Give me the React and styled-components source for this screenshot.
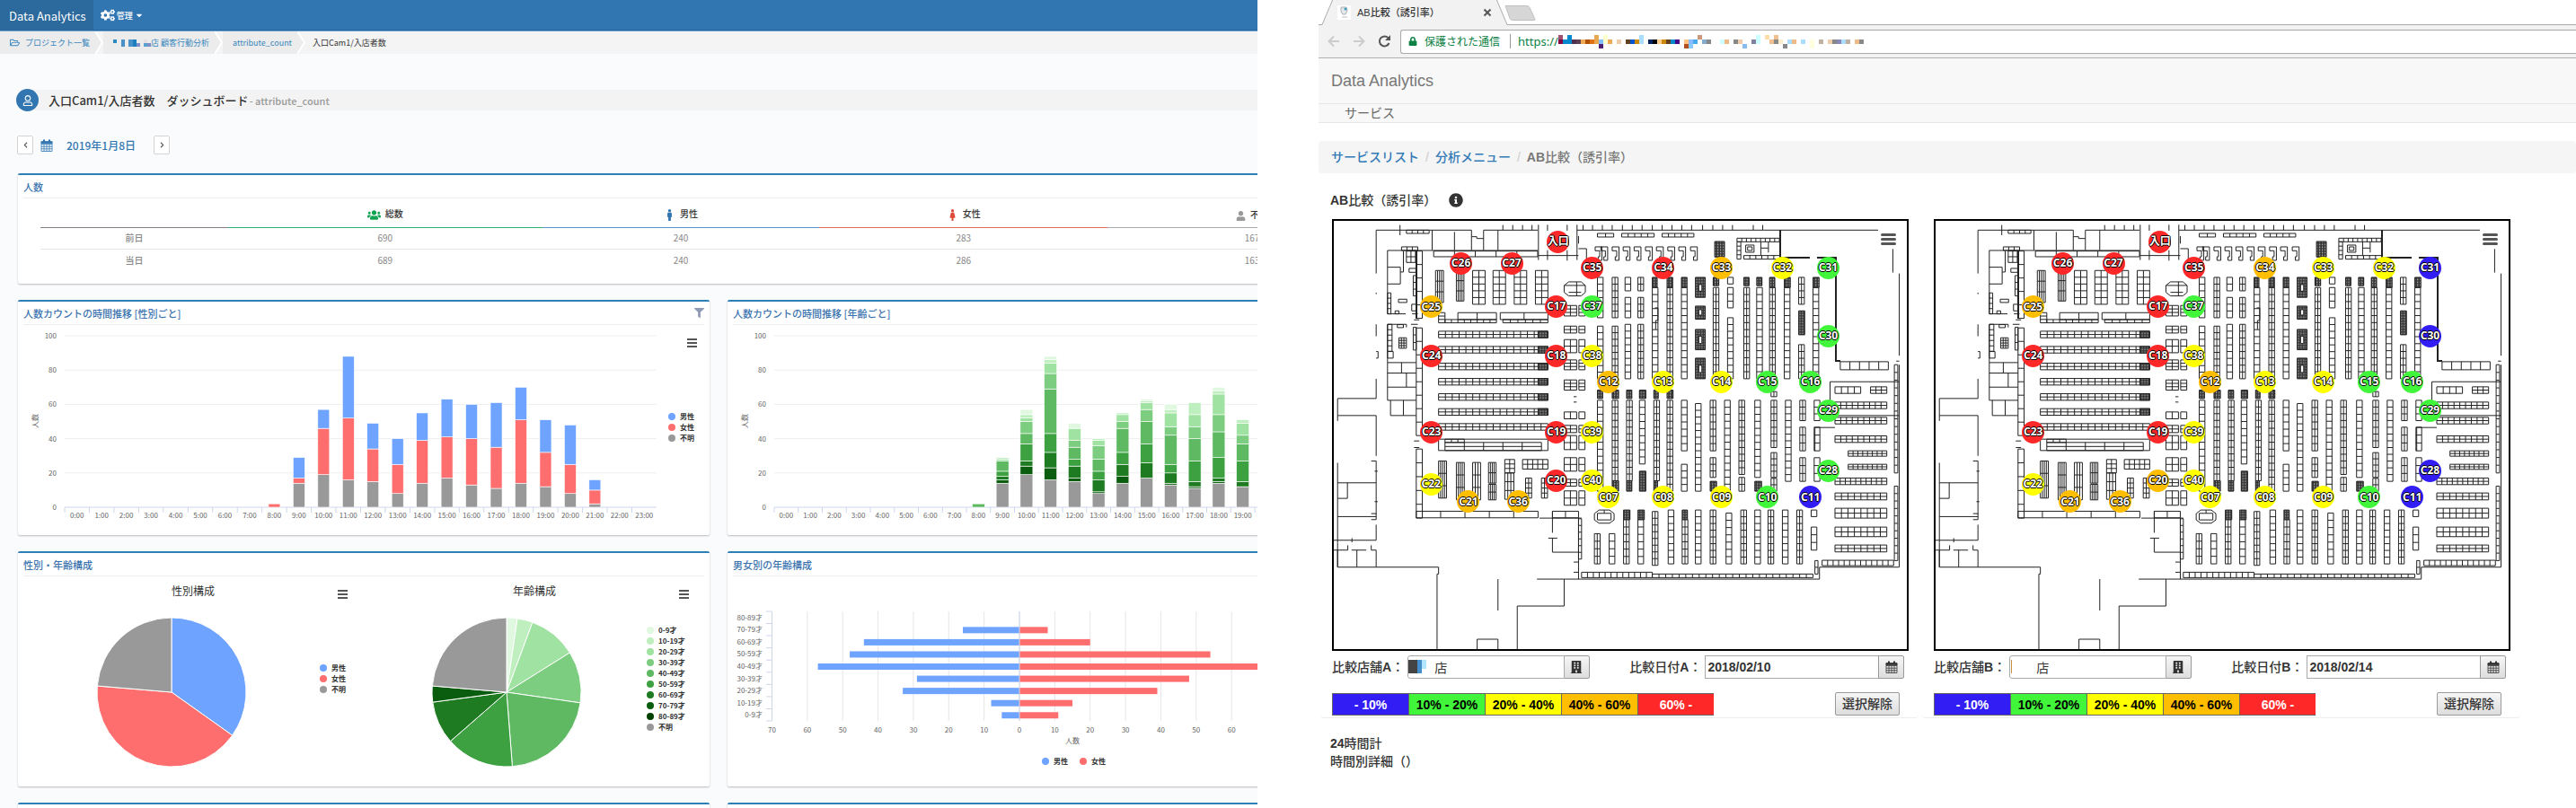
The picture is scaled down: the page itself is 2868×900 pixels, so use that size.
import styled, { createGlobalStyle } from 'styled-components';
import { useState } from 'react';
import {
  FaCogs, FaCaretDown, FaRegFolderOpen, FaRegUser, FaFilter, FaUsers, FaMale,
  FaFemale, FaUser, FaBuilding, FaInfoCircle, FaLock, FaChevronLeft, FaChevronRight,
} from 'react-icons/fa';

const BLUE = '#6ea3ff';
const RED = '#ff6e6e';
const GRAY = '#999999';
const GREENS = ['#e0f8e0', '#bfefbf', '#a0e2a2', '#7dcd80', '#5eb962', '#3da041', '#1e7b22', '#0a5d0e', '#004000'];
const AGES = ['0-9才', '10-19才', '20-29才', '30-39才', '40-49才', '50-59才', '60-69才', '70-79才', '80-89才'];

// per hour, bottom of the stack first
const genderByHour = {
  8: [0, 2, 0], 9: [14, 3, 12], 10: [19, 27, 11], 11: [16, 36, 36], 12: [15, 19, 15],
  13: [8, 17, 15], 14: [14, 25, 16], 15: [17, 24, 22], 16: [13, 27, 20], 17: [11, 24, 26],
  18: [14, 37, 19], 19: [12, 20, 19], 20: [8, 17, 23], 21: [2, 8, 6],
};

// unknown, 70s, 60s, 50s, 40s, 30s, 20s, 10s, 0s
const ageByHour = {
  8: [0, 0, 0, 0, 2], 9: [14, 2, 2, 3, 6, 0, 1, 1, 0], 10: [19, 5, 3, 10, 6, 7, 2, 2, 3],
  11: [16, 7, 9, 11, 26, 9, 6, 2, 2], 12: [15, 2, 7, 4, 7, 4, 7, 0, 3], 13: [8, 1, 7, 5, 7, 8, 3, 1, 0],
  14: [14, 4, 7, 7, 14, 4, 4, 1, 0], 15: [17, 0, 9, 11, 13, 7, 4, 1, 1], 16: [13, 1, 6, 5, 17, 5, 8, 2, 3],
  17: [11, 1, 3, 12, 13, 7, 7, 7, 0], 18: [14, 1, 2, 12, 15, 10, 12, 2, 2], 19: [12, 0, 3, 12, 10, 5, 7, 2, 0],
};
const ageColors = [GRAY, GREENS[7], GREENS[6], GREENS[5], GREENS[4], GREENS[3], GREENS[2], GREENS[1], GREENS[0]];

const pyramid = [
  ['80-89才', 0, 0], ['70-79才', 16, 8], ['60-69才', 44, 20], ['50-59才', 48, 54], ['40-49才', 57, 91],
  ['30-39才', 29, 48], ['20-29才', 33, 39], ['10-19才', 8, 15], ['0-9才', 5, 11],
];

const counts = [
  { day: '前日', values: [690, 240, 283, 167] },
  { day: '当日', values: [689, 240, 286, 163] },
];

// urls are masked: [column, row, colour]
const urlMask = [
  [0, 0, '#a0506e'], [2, 0, '#0088cc'], [8, 0, '#e8a850'], [10, 0, '#ffffcc'], [18, 0, '#aaddff'], [31, 0, '#cc9980'],
  [44, 0, '#ccffff'], [46, 0, '#ffddaa'], [48, 0, '#eec090'],
  [0, 1, '#800040'], [1, 1, '#0088cc'], [2, 1, '#0088cc'], [3, 1, '#503050'], [4, 1, '#604050'], [5, 1, '#eeaa55'],
  [6, 1, '#b05000'], [7, 1, '#e07010'], [8, 1, '#e8a850'], [9, 1, '#80c0ff'], [10, 1, '#ffffcc'], [11, 1, '#eeaa55'],
  [13, 1, '#eeccaa'], [15, 1, '#604020'], [16, 1, '#0055cc'], [17, 1, '#cc8800'], [18, 1, '#aaddff'], [20, 1, '#002060'],
  [21, 1, '#000000'], [22, 1, '#ffcc88'], [23, 1, '#cc8800'], [24, 1, '#604020'], [25, 1, '#0088cc'], [26, 1, '#440088'],
  [28, 1, '#ffc080'], [29, 1, '#88bbff'], [30, 1, '#44aaee'], [32, 1, '#88aacc'], [33, 1, '#888888'], [36, 1, '#ccffff'],
  [37, 1, '#eebb88'], [39, 1, '#888888'], [40, 1, '#eeccaa'], [43, 1, '#8080a0'], [44, 1, '#ccffff'], [47, 1, '#eec090'],
  [48, 1, '#888888'], [49, 1, '#ffeecc'], [51, 1, '#aaddff'], [52, 1, '#eebb88'], [54, 1, '#aaddff'], [56, 1, '#ffffe0'],
  [58, 1, '#c0b0a0'], [60, 1, '#eeccaa'], [61, 1, '#888888'], [62, 1, '#8888bb'], [63, 1, '#aaddff'], [64, 1, '#c0b0a0'],
  [66, 1, '#eebb88'], [67, 1, '#888888'],
  [9, 2, '#502070'], [28, 2, '#b05020'], [29, 2, '#88ccff'], [41, 2, '#88bbee'], [50, 2, '#888888'], [56, 2, '#ffffe0'],
];

const levels = {
  b: { bg: '#321ef5', fg: '#ffffff', text: '- 10%' },
  g: { bg: '#41f53a', fg: '#000000', text: '10% - 20%' },
  y: { bg: '#ffff00', fg: '#000000', text: '20% - 40%' },
  o: { bg: '#ffbe00', fg: '#000000', text: '40% - 60%' },
  r: { bg: '#ff2828', fg: '#ffffff', text: '60% -' },
};

// name, x, y on the plan, level in A, level in B
const cameras = [
  ['入口', 628, 117, 'r', 'r'], ['C26', 371, 190, 'r', 'r'], ['C27', 505, 190, 'r', 'r'], ['C35', 718, 205, 'r', 'r'],
  ['C34', 906, 205, 'r', 'o'], ['C33', 1060, 205, 'o', 'y'], ['C32', 1221, 205, 'y', 'y'], ['C31', 1342, 205, 'g', 'b'],
  ['C25', 292, 335, 'o', 'o'], ['C17', 623, 334, 'r', 'r'], ['C37', 718, 334, 'g', 'g'], ['C30', 1342, 433, 'g', 'b'],
  ['C24', 293, 499, 'r', 'r'], ['C18', 623, 499, 'r', 'r'], ['C38', 718, 499, 'y', 'y'], ['C12', 761, 586, 'o', 'o'],
  ['C13', 906, 586, 'y', 'y'], ['C14', 1060, 586, 'y', 'y'], ['C15', 1181, 586, 'g', 'g'], ['C16', 1295, 586, 'g', 'g'],
  ['C29', 1342, 682, 'g', 'g'], ['C23', 293, 754, 'r', 'r'], ['C19', 623, 754, 'r', 'r'], ['C39', 718, 754, 'y', 'y'],
  ['C22', 292, 928, 'y', 'y'], ['C20', 623, 916, 'r', 'o'], ['C40', 718, 916, 'y', 'y'], ['C21', 391, 986, 'o', 'o'],
  ['C36', 522, 986, 'o', 'o'], ['C07', 761, 972, 'y', 'y'], ['C08', 906, 972, 'y', 'y'], ['C09', 1060, 972, 'y', 'y'],
  ['C10', 1181, 972, 'g', 'g'], ['C11', 1295, 972, 'b', 'b'], ['C28', 1342, 883, 'g', 'b'],
];

// ---- floor plan -------------------------------------------------------

const PLAN = { x: 36, y: 49, w: 1515, h: 1432 };

const walls = `
M148 225V80H400V147M211 63V97M148 289V294M148 395V435M148 486h5v22h-5M148 577V643H46V718M46 700H148V835
M296 80V147M355 86V147M400 102h14v6h18M432 147V80H575M470 80V147M483 63V80M509 63V80M535 63V80M560 63V80
M577 62V180M601 62V82M601 147V180M653 62V82M653 147V182M679 62V180M577 165H683M683 100V125M683 142H704V175
M679 80H1172M695 63V80M720 63V80M746 63V80M772 63V80M799 63V80M825 63V80M851 63V80M878 63V80M904 63V80M930 63V80
M956 63V80M982 63V80M1011 63V80M1038 63V80M1064 63V80M1090 63V80M1145 63V80M1170 63V80M1172 80H1475
M1514 143V222M1531 225V500M1523 518h8M1531 530V1207H1320V1247H573M683 1247V1043M580 1043H691M614 1020V1092M603 1110H627
M614 1110V1157H683M670 1190H683M670 1224H683M645 1247V1337H521V1485M470 1247V1352M309 1485V1230H313V1207H46V1125M46 1150V1207
M46 858V1125M31 1117H148M84 1110V1124M31 1150H73V1134M83 1150H122M135 1134V1150H148V1207M97 1150V1207
M46 1038H148M46 925H148M72 925V977H46M135 852H148V1030M144 886h8M144 988h8M135 1028H148V1048H135M148 1065V1117
M415 1485V1448H470V1485M178 148V360H226M178 148H575M220 150V220H212M178 204H212V260H178M243 360H258M178 395H228V405M240 395H258
M178 395V523M178 523H254M215 523V558M178 558H254M228 558V605M178 605H254M178 523V649H254M186 649V700H254M220 649V700
M248 785H262M248 807H262M248 380H262M670 637h8M670 655h8M1348 655V587H1531M1365 700H1531M1361 740H1308V818
M885 340h8v42h-6v30M1165 119V165M1185 119V155M1185 140H1165`;

const thickWalls = 'M1215 80V172H1295M1313 172H1363V518H1375M254 148V375';

// x, y, width, height, columns, rows
const racks = [
  [254, 150, 16, 225, 1, 5], [254, 407, 16, 360, 1, 8], [254, 812, 16, 231, 1, 5], [254, 1020, 322, 22, 5, 1],
  [614, 1020, 69, 22, 2, 1], [300, 150, 275, 19, 5, 1], [215, 136, 43, 12, 3, 1], [228, 80, 60, 11, 4, 1],
  [235, 208, 18, 13, 1, 1], [207, 311, 22, 11, 1, 1], [242, 328, 12, 22, 1, 1], [198, 350, 10, 10, 1, 1],
  [178, 290, 9, 70, 1, 4], [246, 232, 9, 68, 1, 3], [228, 150, 24, 38, 2, 2], [204, 396, 16, 10, 1, 1],
  [208, 440, 20, 35, 3, 4], [178, 395, 12, 90, 1, 5], [246, 405, 8, 76, 1, 3], [178, 486, 15, 22, 1, 1],
  [305, 215, 21, 107, 4, 3], [360, 215, 20, 102, 4, 3], [403, 215, 33, 113, 2, 5], [457, 215, 33, 113, 2, 5],
  [513, 215, 33, 113, 2, 5], [569, 215, 33, 113, 2, 5], [313, 356, 17, 34, 1, 3], [364, 356, 102, 23, 2, 1],
  [476, 356, 126, 23, 2, 1], [330, 379, 136, 11, 8, 1], [483, 379, 119, 11, 6, 1],
  [313, 418, 289, 22, 16, 2], [313, 469, 289, 22, 16, 2], [313, 525, 289, 22, 16, 2], [313, 576, 289, 22, 16, 2],
  [313, 627, 289, 22, 16, 2], [313, 677, 289, 22, 16, 2], [313, 727, 289, 22, 16, 2], [313, 779, 289, 38, 1, 1],
  [330, 790, 255, 27, 5, 2], [330, 779, 51, 11, 3, 1], [313, 852, 21, 124, 4, 3], [360, 857, 21, 125, 4, 3],
  [403, 857, 21, 125, 3, 3], [445, 857, 20, 69, 4, 2], [445, 930, 20, 52, 4, 2], [488, 847, 26, 45, 2, 3],
  [488, 892, 24, 88, 3, 3], [535, 847, 67, 32, 5, 2], [543, 909, 16, 67, 2, 4], [585, 909, 16, 67, 2, 4],
  [733, 91, 43, 12, 2, 1], [797, 91, 86, 12, 5, 1], [904, 91, 84, 12, 5, 1], [1102, 107, 112, 12, 9, 1],
  [1102, 119, 10, 58, 1, 4], [1125, 130, 22, 24, 1, 1], [1130, 136, 12, 12, 1, 1], [1120, 165, 95, 12, 6, 1],
  [691, 1224, 187, 18, 12, 1], [878, 1230, 425, 12, 24, 1], [1308, 1185, 8, 45, 1, 2], [1327, 1184, 189, 18, 13, 1],
  [1518, 530, 9, 362, 1, 14], [1518, 936, 9, 249, 1, 10], [683, 1045, 8, 135, 1, 6],
  [1375, 520, 127, 27, 5, 1], [1361, 604, 68, 22, 4, 1], [1455, 604, 43, 22, 3, 2], [1361, 655, 137, 22, 9, 2],
  [1361, 706, 137, 22, 9, 2], [1361, 768, 137, 22, 9, 2], [1396, 818, 102, 18, 8, 2], [1396, 863, 102, 17, 8, 2],
  [1361, 909, 137, 22, 10, 2], [1361, 959, 137, 23, 8, 2], [1361, 1010, 137, 33, 8, 2], [1361, 1073, 137, 32, 8, 2],
  [1361, 1133, 137, 23, 8, 2],
];

// blocks of the central walkway: top, height, rows
[[332, 35, 3], [401, 23, 2], [446, 44, 2], [514, 33, 3], [581, 34, 3], [688, 23, 1], [733, 24, 2], [767, 47, 2],
  [841, 45, 2], [913, 23, 2], [952, 48, 2]].forEach(([y, h, rows]) => {
  racks.push([645, y, 33, h, 2, rows], [684, y, 16, h, 1, rows]);
});

// shelves that run north to south: x, then the start and end of each run
[
  [733, 238, 373, 401, 577, 649, 953], [772, 238, 373, 401, 577, 649, 918], [806, 238, 283, 305, 373, 395, 577],
  [840, 238, 283, 305, 373, 395, 577], [878, 272, 577], [917, 272, 577, 649, 953], [955, 272, 577, 649, 818, 863, 953],
  [810, 649, 918], [844, 649, 862], [882, 649, 918], [992, 660, 953], [1039, 272, 577], [1077, 238, 260, 272, 340, 373, 577],
  [1120, 272, 577], [1154, 272, 577], [1188, 272, 577], [1227, 272, 577], [1265, 238, 328, 463, 577], [1303, 272, 577],
  [1031, 649, 818, 841, 907], [1069, 649, 953], [1107, 649, 897, 907, 953], [1149, 649, 907],
  [1192, 620, 637, 649, 807, 824, 907, 910, 953], [1230, 649, 920], [1268, 649, 717, 739, 818, 841, 920],
  [1306, 649, 717, 739, 818, 841, 920], [725, 1095, 1196], [764, 1095, 1196], [802, 1048, 1196], [840, 1048, 1196],
  [878, 1021, 1201], [920, 1016, 1196], [957, 1048, 1196], [992, 1016, 1196], [1031, 1016, 1196], [1073, 1026, 1196],
  [1112, 1016, 1196], [1149, 1016, 1196], [1184, 1016, 1196], [1222, 1016, 1196], [1260, 1016, 1196],
  [1298, 1016, 1038, 1073, 1150],
].forEach(([x, ...runs], n) => {
  for (let i = 0; i < runs.length; i += 2) {
    const h = runs[i + 1] - runs[i];
    racks.push([x, runs[i], 15, h, n % 2 === 0 ? 1 : 2, Math.max(1, Math.round(h / 23))]);
  }
});

const darkRacks = [
  [576, 418, 26, 22], [576, 469, 26, 22], [576, 525, 26, 22], [576, 576, 26, 22], [576, 627, 26, 22], [576, 677, 26, 22],
  [1043, 118, 26, 52], [878, 238, 13, 34], [917, 238, 15, 34], [955, 238, 15, 34], [992, 238, 26, 67], [992, 334, 26, 44],
  [992, 412, 26, 68], [992, 508, 26, 69], [1039, 238, 15, 28], [1120, 238, 14, 28], [1154, 238, 14, 28], [1188, 238, 14, 34],
  [1227, 238, 16, 34], [1265, 350, 16, 80], [1303, 238, 16, 34], [733, 615, 14, 28], [772, 615, 17, 28], [810, 615, 14, 28],
  [844, 615, 17, 28], [882, 615, 12, 28], [917, 615, 16, 28], [772, 918, 17, 35], [810, 918, 14, 35], [844, 886, 17, 67],
  [882, 918, 10, 35], [1031, 920, 17, 33], [1149, 920, 18, 33], [802, 1016, 17, 32], [840, 1016, 17, 32], [957, 1016, 14, 32],
];

const rackPath = racks
  .map(([x, y, w, h, cols, rows]) => {
    let d = `M${x} ${y}h${w}v${h}h${-w}z`;
    for (let c = 1; c < cols; c++) d += `M${x + (w * c) / cols} ${y}v${h}`;
    for (let r = 1; r < rows; r++) d += `M${x} ${y + (h * r) / rows}h${w}`;
    return d;
  })
  .join('');

const darkPath = darkRacks.map(([x, y, w, h]) => `M${x} ${y}h${w}v${h}h${-w}z`).join('');
const tills = [727, 742, 772, 801, 830, 860, 889, 919, 948, 979]
  .map((x) => `M${x} 136h18v45h-10v-12h4v-20h-12z`)
  .join('');
const octagons = 'M657 253H690L701 265V288L690 300H657L645 288V265ZM678 253V300M645 265H701M657 288H690M737 1016H765L777 1028V1049L765 1060H737L725 1049V1028ZM733 1027H769V1049H733ZM751 1016V1027';

function FloorPlan() {
  return (
    <PlanDrawing viewBox={`${PLAN.x} ${PLAN.y} ${PLAN.w} ${PLAN.h}`} preserveAspectRatio="none">
      <defs>
        <pattern id="mesh" width="7" height="9" patternUnits="userSpaceOnUse">
          <rect width="7" height="9" fill="#333333" />
          <rect width="3" height="4" fill="#cccccc" />
        </pattern>
      </defs>
      <path d={walls} />
      <path d={rackPath} />
      <path d={tills} />
      <path d={octagons} />
      <path d={darkPath} fill="url(#mesh)" />
      <path d={thickWalls} strokeWidth="2" />
      <path d="M1001 262h8v22h-8zM1001 346h8v18h-8zM1001 435h8v24h-8zM1001 532h8v24h-8z" fill="#ffffff" />
    </PlanDrawing>
  );
}

// ---- charts -------------------------------------------------------

function Legend({ items, x, y }) {
  return items.map(([name, color], i) => (
    <g key={name}>
      <circle cx={x} cy={y + i * 12} r="4" fill={color} />
      <LegendText x={x + 9} y={y + i * 12 + 3}>{name}</LegendText>
    </g>
  ));
}

const genderLegend = [['男性', BLUE], ['女性', RED], ['不明', GRAY]];

function MenuMark({ x, y }) {
  return <path d={`M${x} ${y}h11M${x} ${y + 4}h11M${x} ${y + 8}h11`} stroke="#555555" strokeWidth="2" />;
}

function StackedChart({ data, colors, plotWidth, barWidth, label, children }) {
  const left = 52;
  const bottom = 203;
  const step = plotWidth / 24;
  const unit = 191 / 100;
  const hours = Array.from({ length: 24 }, (_, h) => h);

  return (
    <Chart viewBox="0 0 770 234" role="img" aria-label={label}>
      {[0, 20, 40, 60, 80, 100].map((v) => (
        <g key={v}>
          <path d={`M${left} ${bottom - v * unit}h${plotWidth}`} stroke={v ? '#eeeeee' : '#ccd6eb'} />
          <AxisText x="43" y={bottom - v * unit + 3} textAnchor="end">{v}</AxisText>
        </g>
      ))}
      <AxisText x="19" y="107" textAnchor="middle" transform="rotate(-90 19 107)" dy="3">人数</AxisText>
      {hours.map((h) => {
        let sum = 0;
        return (
          <g key={h}>
            <path d={`M${left + h * step} ${bottom}v6`} stroke="#ccd6eb" />
            {(data[h] || []).map((v, i) => {
              sum += v;
              return v > 0 && (
                <rect
                  key={i}
                  x={left + (h + 0.5) * step - barWidth / 2}
                  y={bottom - sum * unit}
                  width={barWidth}
                  height={v * unit}
                  fill={colors[i]}
                  stroke="#ffffff"
                  strokeWidth="0.6"
                />
              );
            })}
            <AxisText x={left + (h + 0.5) * step} y="215" textAnchor="middle">{h}:00</AxisText>
          </g>
        );
      })}
      {children}
    </Chart>
  );
}

function Pie({ cx, cy, r, slices }) {
  const total = slices.reduce((a, [, , v]) => a + v, 0);
  const point = (v) => {
    const a = (v / total) * Math.PI * 2;
    return `${cx + r * Math.sin(a)} ${cy - r * Math.cos(a)}`;
  };
  let from = 0;
  return slices.map(([name, color, v]) => {
    const start = from;
    from += v;
    return (
      <path
        key={name}
        d={`M${cx} ${cy}L${point(start)}A${r} ${r} 0 ${v > total / 2 ? 1 : 0} 1 ${point(from)}Z`}
        fill={color}
        stroke="#ffffff"
      />
    );
  });
}

const genderSlices = [['男性', BLUE, 240], ['女性', RED, 286], ['不明', GRAY, 163]];
const ageSlices = [16, 23, 72, 77, 148, 102, 64, 24, 0]
  .map((v, i) => [AGES[i], GREENS[i], v])
  .concat([['不明', GRAY, 163]]);

function Pies() {
  return (
    <Chart viewBox="0 0 770 234" role="img" aria-label="性別・年齢構成">
      <ChartTitle x="195" y="21">性別構成</ChartTitle>
      <MenuMark x={356} y={16} />
      <Pie cx={171} cy={129} r={83} slices={genderSlices} />
      <Legend items={genderLegend} x={340} y={102} />
      <ChartTitle x="575" y="21">年齢構成</ChartTitle>
      <MenuMark x={736} y={16} />
      <Pie cx={544} cy={129} r={83} slices={ageSlices.filter(([, , v]) => v > 0)} />
      <Legend items={ageSlices} x={704} y={60} />
    </Chart>
  );
}

function Pyramid() {
  const zero = 325;
  const unit = 3.936;
  const top = 39;
  const row = 13.56;
  const ticks = [-70, -60, -50, -40, -30, -20, -10, 0, 10, 20, 30, 40, 50, 60];

  return (
    <Chart viewBox="0 0 770 234" role="img" aria-label="男女別の年齢構成">
      {ticks.map((t) => (
        <g key={t}>
          <path d={`M${zero + t * unit} ${top}v122`} stroke={t === -70 ? '#ccd6eb' : '#e6e6e6'} />
          <AxisText x={zero + t * unit} y="174" textAnchor="middle">{Math.abs(t)}</AxisText>
        </g>
      ))}
      {pyramid.map(([age, men, women], i) => (
        <g key={age}>
          <path d={`M43 ${top + i * row}h6`} stroke="#ccd6eb" />
          <AxisText x="39" y={top + (i + 0.5) * row + 3} textAnchor="end">{age}</AxisText>
          <rect x={zero - men * unit} y={top + (i + 0.5) * row - 3} width={men * unit} height="7" fill={BLUE} />
          <rect x={zero} y={top + (i + 0.5) * row - 3} width={women * unit} height="7" fill={RED} />
        </g>
      ))}
      <path d={`M43 ${top + 122}h6M${zero} ${top}v122`} stroke="#ccd6eb" />
      <AxisText x="384" y="186" textAnchor="middle">人数</AxisText>
      <Legend items={[['男性', BLUE]]} x={354} y={206} />
      <Legend items={[['女性', RED]]} x={396} y={206} />
    </Chart>
  );
}

function CalendarIcon({ size, color }) {
  return (
    <svg width={size} height={size} viewBox="0 0 14 14" fill="none" stroke={color} strokeWidth="0.8">
      <path d="M1 2.500h12v11H1zM1 5.500h12M1 8.200h12M1 10.800h12M4 5.500v8M7 5.500v8M10 5.500v8" />
      <path d="M1 3h12v1.500H1z" fill={color} />
      <path d="M4 .5v3M10 .5v3" strokeWidth="2" />
    </svg>
  );
}

function Panel({ title, tool, children }) {
  return (
    <PanelBox>
      <PanelTitle>{title}{tool}</PanelTitle>
      {children}
    </PanelBox>
  );
}

function Crumb({ href, children }) {
  return (
    <CrumbItem>
      <a href={href}>{children}</a>
      <svg width="9" height="25" viewBox="0 0 9 25">
        <path d="M0 0L8 12.5L0 25H9V0Z" fill="#f4f4f4" />
        <path d="M0 0L8 12.5L0 25" fill="none" stroke="#ffffff" strokeWidth="2" />
      </svg>
    </CrumbItem>
  );
}

function Dashboard() {
  return (
    <DashboardPage>
      <DashboardInner>
        <NavBar>
          <Brand href="#top">Data Analytics</Brand>
          <NavButton type="button"><FaCogs size={16} />管理<FaCaretDown size={10} /></NavButton>
        </NavBar>

        <CrumbBar>
          <Crumb href="#projects"><FaRegFolderOpen size={11} />プロジェクト一覧</Crumb>
          <Crumb href="#store">
            <svg width="42" height="12" viewBox="0 0 42 12">
              <path d="M0 2h4v4h-4z" fill="#2b8abf" />
              <path d="M9 2h4v8h-4zM17 2h5v8h-5z" fill="#4a90c8" />
              <path d="M22 2h4v8h-4z" fill="#1c7fc0" />
              <path d="M26 6h4v4h-4zM38 6h4v4h-4z" fill="#7f8fc8" />
              <path d="M34 2h4v4h-4z" fill="#eadfe0" />
              <path d="M34 6h4v4h-4z" fill="#5aa0d0" />
            </svg>
            店 顧客行動分析
          </Crumb>
          <Crumb href="#attribute">attribute_count</Crumb>
          <CurrentCrumb>入口Cam1/入店者数</CurrentCrumb>
        </CrumbBar>

        <PageTitle>
          <TitleIcon><FaRegUser size={12} /></TitleIcon>
          <h1>入口Cam1/入店者数　ダッシュボード</h1>
          <small>- attribute_count</small>
        </PageTitle>

        <DateRow>
          <StepButton type="button" aria-label="前の日"><FaChevronLeft size={7} /></StepButton>
          <CalendarIcon size={14} color="#3276b1" />
          <time dateTime="2019-01-08">2019年1月8日</time>
          <StepButton type="button" aria-label="次の日"><FaChevronRight size={7} /></StepButton>
        </DateRow>

        <Panels>
          <WidePanel>
            <Panel title="人数">
              <CountTable>
                <colgroup>
                  <Col $w={209} /><Col $w={350} /><Col $w={309} /><Col $w={321} /><Col $w={322} />
                </colgroup>
                <thead>
                  <tr>
                    <HeadCell $line="#8a7f80" aria-label="日" />
                    <HeadCell $line="#2bb273"><FaUsers size={15} color="#10a352" />総数</HeadCell>
                    <HeadCell $line="#5a93cc"><FaMale size={13} color="#3276b1" />男性</HeadCell>
                    <HeadCell $line="#e2675f"><FaFemale size={13} color="#dd4b39" />女性</HeadCell>
                    <HeadCell $line="#aaaaaa"><FaUser size={11} color="#999999" />不明</HeadCell>
                  </tr>
                </thead>
                <tbody>
                  {counts.map((c) => (
                    <tr key={c.day}>
                      <th scope="row">{c.day}</th>
                      {c.values.map((v, i) => <td key={i}>{v}</td>)}
                    </tr>
                  ))}
                </tbody>
              </CountTable>
            </Panel>
          </WidePanel>

          <Panel title="人数カウントの時間推移 [性別ごと]" tool={<FaFilter size={11} color="#8f9bb5" />}>
            <StackedChart data={genderByHour} colors={[GRAY, RED, BLUE]} plotWidth={659} barWidth={13} label="性別ごとの人数">
              <MenuMark x={745} y={16} />
              <Legend items={genderLegend} x={728} y={102} />
            </StackedChart>
          </Panel>
          <Panel title="人数カウントの時間推移 [年齢ごと]">
            <StackedChart data={ageByHour} colors={ageColors} plotWidth={642} barWidth={14} label="年齢ごとの人数" />
          </Panel>
          <Panel title="性別・年齢構成"><Pies /></Panel>
          <Panel title="男女別の年齢構成"><Pyramid /></Panel>
          <PanelBox />
          <PanelBox />
        </Panels>
      </DashboardInner>
    </DashboardPage>
  );
}

function StoreCompare({ side }) {
  const first = side === 'A';
  const [store, setStore] = useState('店');
  const [date, setDate] = useState(first ? '2018/02/10' : '2018/02/14');

  return (
    <CompareCard>
      <PlanFrame>
        <FloorPlan />
        {cameras.map(([name, x, y, a, b]) => (
          <Pin
            key={name}
            $color={levels[first ? a : b].bg}
            style={{ left: `${((x - PLAN.x) / PLAN.w) * 100}%`, top: `${((y - PLAN.y) / PLAN.h) * 100}%` }}
          >
            {name}
          </Pin>
        ))}
        <PlanMenu type="button" aria-label="メニュー">
          <svg width="17" height="15" viewBox="0 0 17 15">
            <path d="M1.500 2.500h14M1.500 7.500h14M1.500 12.500h14" stroke="#555555" strokeWidth="3" strokeLinecap="round" />
          </svg>
        </PlanMenu>
      </PlanFrame>

      <Fields>
        <StoreField>
          <label htmlFor={`store${side}`}>比較店舗<b>{side}</b>：</label>
          <MaskedInput>
            <input id={`store${side}`} value={store} onChange={(e) => setStore(e.target.value)} />
            <svg width="21" height="15" viewBox="0 0 21 15">
              {first ? (
                <>
                  <path d="M0 0h10v15h-10z" fill="#444444" />
                  <path d="M10 0h5v15h-5z" fill="#4590cc" />
                  <path d="M15 0h5v10h-5z" fill="#b0e4ff" />
                </>
              ) : (
                <path d="M1 0h1v15h-1z" fill="#cc9040" />
              )}
            </svg>
          </MaskedInput>
          <IconButton type="button" aria-label="店舗を選ぶ"><FaBuilding size={14} /></IconButton>
        </StoreField>
        <DateField>
          <label htmlFor={`date${side}`}>比較日付<b>{side}</b>：</label>
          <input id={`date${side}`} value={date} onChange={(e) => setDate(e.target.value)} />
          <IconButton type="button" aria-label="日付を選ぶ"><CalendarIcon size={14} color="#333333" /></IconButton>
        </DateField>
      </Fields>

      <LevelRow>
        <Levels>
          {Object.values(levels).map((l) => <Level key={l.text} $bg={l.bg} $fg={l.fg}>{l.text}</Level>)}
        </Levels>
        <ClearButton type="button">選択解除</ClearButton>
      </LevelRow>
    </CompareCard>
  );
}

function Browser() {
  return (
    <BrowserPage>
      <TabStrip>
        <svg width="210" height="28" viewBox="0 0 210 28">
          <path d="M0 28V27.5H4L16 -1H198L210 27.5V28Z" fill="#f2f2f2" />
          <path d="M0 27.5H4L16 -1M198 -1L210 27.5" fill="none" stroke="#aaaaaa" />
        </svg>
        <TabLabel>
          <svg width="15" height="16" viewBox="0 0 15 16">
            <path d="M0 0h15v16H0z" fill="#ffffff" />
            <path d="M4 2h6l1 4-2 4H6L4 7z" fill="#e4e8ea" stroke="#a8b0b4" />
            <circle cx="9" cy="4" r="1.5" fill="#40a0c0" />
            <path d="M5 13h6" stroke="#c0c0c0" />
          </svg>
          <span>AB比較（誘引率）</span>
          <button type="button" aria-label="閉じる">
            <svg width="10" height="10" viewBox="0 0 10 10"><path d="M1.5 1.5l7 7M8.5 1.5l-7 7" stroke="#555555" strokeWidth="2" /></svg>
          </button>
        </TabLabel>
        <NewTab type="button" aria-label="新しいタブ">
          <svg width="35" height="17" viewBox="0 0 35 17"><path d="M1 .5h24q2 0 3 2l6 13q0 1-1 1H9q-2 0-3-2z" fill="#d6d6d6" stroke="#c0c0c0" /></svg>
        </NewTab>
      </TabStrip>

      <AddressBar>
        <svg width="14" height="14" viewBox="0 0 14 14"><path d="M13 7H1.5M7 1.5L1.5 7L7 12.5" fill="none" stroke="#cccccc" strokeWidth="2" /></svg>
        <svg width="14" height="14" viewBox="0 0 14 14"><path d="M1 7h11.500M7 1.500L12.500 7L7 12.500" fill="none" stroke="#cccccc" strokeWidth="2" /></svg>
        <svg width="15" height="14" viewBox="0 0 15 14"><path d="M12.500 9A5.500 5.500 0 1 1 11.500 3.200" fill="none" stroke="#555555" strokeWidth="2" /><path d="M14 0v6H8z" fill="#555555" /></svg>
        <UrlBox>
          <FaLock size={10} />
          <Secure>保護された通信</Secure>
          <Scheme>https://</Scheme>
          <svg width="340" height="15" viewBox="0 0 340 15" shapeRendering="crispEdges">
            {urlMask.map(([c, r, color]) => <rect key={`${c}-${r}`} x={c * 5} y={r * 5} width="5" height="5" fill={color} />)}
          </svg>
        </UrlBox>
      </AddressBar>

      <SiteName href="#home">Data Analytics</SiteName>
      <SiteMenu><a href="#service">サービス</a></SiteMenu>

      <SitePath>
        <a href="#list">サービスリスト</a><i>/</i>
        <a href="#menu">分析メニュー</a><i>/</i>
        <span><b>AB</b>比較（誘引率）</span>
      </SitePath>

      <CompareTitle><b>AB</b>比較（誘引率）<FaInfoCircle size={16} /></CompareTitle>

      <CompareGrid>
        <StoreCompare side="A" />
        <StoreCompare side="B" />
      </CompareGrid>

      <Totals>
        <p><b>24</b>時間計</p>
        <p>時間別詳細（）</p>
      </Totals>
    </BrowserPage>
  );
}

export default function App() {
  return (
    <>
      <GlobalStyle />
      <Split>
        <Dashboard />
        <Browser />
      </Split>
    </>
  );
}

const GlobalStyle = createGlobalStyle`
  * { box-sizing: border-box; }
  body { margin: 0; background: #ffffff; text-spacing-trim: space-all; }
  button, input { font: inherit; color: inherit; }
  a { color: inherit; text-decoration: none; }
  h1, h2, p { margin: 0; }
`

const Split = styled.div`
  display: grid;
  grid-template-columns: minmax(0, 1fr) minmax(0, 1fr);
  gap: 68px;
  height: 100vh;
  overflow: hidden;
`

const DashboardPage = styled.div`
  overflow: hidden;
  background: #fafbfd;
  font-family: "Noto Sans CJK JP", sans-serif;
  font-size: 9px;
  color: #333333;
`

const DashboardInner = styled.div`
  min-width: 1600px;
`

const NavBar = styled.nav`
  display: flex;
  height: 35px;
  background: #3276b1;
  border-bottom: 1px solid #6ea0cc;
  box-shadow: inset 0 -1px 0 #28659c;
  color: #ffffff;
`

const Brand = styled.a`
  display: flex;
  align-items: center;
  padding: 0 8px 0 10px;
  background: #2c699d;
  font-size: 13px;
`

const NavButton = styled.button`
  display: flex;
  align-items: center;
  gap: 2px;
  padding: 0 8px;
  border: 0;
  background: none;
  font-size: 9px;
  font-weight: 500;
`

const CrumbBar = styled.nav`
  display: flex;
  align-items: center;
  height: 25px;
  background: #f4f4f4;
  font-size: 9px;
`

const CrumbItem = styled.span`
  display: flex;
  align-items: center;
  height: 25px;
  padding-left: 11px;
  background: #ececec;
  color: #3a87bd;

  a {
    display: flex;
    align-items: center;
    gap: 6px;
    margin-right: 6px;
  }
  & + & a { gap: 0; }
`

const CurrentCrumb = styled.span`
  padding-left: 8px;
`

const PageTitle = styled.header`
  display: flex;
  align-items: center;
  height: 23px;
  margin: 40px 0 0 30px;
  background: #f3f3f3;

  h1 {
    margin-left: 11px;
    font-size: 13px;
    font-weight: 500;
  }
  small {
    margin-left: 1px;
    font-size: 11px;
    font-weight: 500;
    color: #999999;
  }
`

const TitleIcon = styled.span`
  display: grid;
  place-items: center;
  width: 25px;
  height: 25px;
  margin-left: -12px;
  border-radius: 50%;
  background: #3276b1;
  color: #ffffff;
`

const DateRow = styled.div`
  display: flex;
  align-items: center;
  gap: 8px;
  height: 21px;
  margin: 28px 19px 21px;
  font-size: 12px;
  font-weight: 500;
  color: #3276b1;

  time {
    width: 96px;
    padding-left: 7px;
  }
`

const StepButton = styled.button`
  display: grid;
  place-items: center;
  width: 18px;
  height: 21px;
  padding: 0;
  border: 1px solid #d4d4d4;
  border-radius: 2px;
  background: #ffffff;
  color: #555555;
`

const Panels = styled.main`
  display: grid;
  grid-template-columns: 1fr 1fr;
  gap: 18px 20px;
  padding: 0 20px;
`

const WidePanel = styled.div`
  grid-column: 1 / -1;
`

const PanelBox = styled.section`
  min-height: 123px;
  border-top: 2px solid #2f80b5;
  border-radius: 2px;
  background: #ffffff;
  box-shadow: 0 1px 2px rgba(0, 0, 0, 0.25);
`

const PanelTitle = styled.h2`
  display: flex;
  align-items: center;
  justify-content: space-between;
  height: 26px;
  margin: 0 6px;
  border-bottom: 1px solid #eeeeee;
  font-size: 11px;
  font-weight: 500;
  color: #3b73af;
`

const CountTable = styled.table`
  width: calc(100% - 50px);
  margin: 0 auto;
  table-layout: fixed;
  border-collapse: collapse;
  text-align: center;
  font-size: 10px;
  line-height: 14px;
  color: #888888;

  th {
    padding: 0;
    font-weight: 500;
  }
  td { padding: 0; }
  tbody tr { height: 24px; }
  tbody tr + tr {
    height: 26px;
    border-top: 1px solid #e4e4e4;
  }
`

const Col = styled.col`
  width: ${(props) => (props.$w / 1511) * 100}%;
`

const HeadCell = styled.th`
  height: 32px;
  border-bottom: 1px solid ${(props) => props.$line};
  color: #333333;

  thead & { padding-top: 4px; }

  svg {
    margin-right: 5px;
    vertical-align: middle;
  }
`

const Chart = styled.svg`
  display: block;
  width: 100%;
  height: auto;
`

const AxisText = styled.text`
  font-size: 8px;
  fill: #666666;
`

const LegendText = styled.text`
  font-size: 8px;
  font-weight: 700;
  fill: #333333;
`

const ChartTitle = styled.text`
  font-size: 12px;
  text-anchor: middle;
  fill: #333333;
`

const BrowserPage = styled.div`
  overflow: hidden;
  font-family: "Liberation Sans", "Noto Sans CJK JP", sans-serif;
  font-size: 14px;
  font-weight: 500;
  line-height: 20px;
  color: #333333;
`

const TabStrip = styled.div`
  position: relative;
  display: flex;
  height: 28px;
  box-shadow: inset 0 -1px 0 #aaaaaa;

  > svg {
    position: absolute;
    left: 0;
    top: 0;
  }
`

const TabLabel = styled.div`
  position: relative;
  display: flex;
  align-items: center;
  width: 207px;
  padding-left: 21px;
  font-size: 11px;

  span {
    flex: 1;
    margin-left: 7px;
  }
  button {
    display: grid;
    padding: 0;
    margin-right: 14px;
    border: 0;
    background: none;
  }
`

const NewTab = styled.button`
  position: relative;
  display: grid;
  align-items: center;
  height: 28px;
  padding: 0;
  border: 0;
  background: none;
`

const AddressBar = styled.div`
  display: flex;
  align-items: center;
  gap: 14px;
  height: 37px;
  padding-left: 10px;
  border-bottom: 1px solid #b0b0b0;
  background: #f2f2f2;
`

const UrlBox = styled.div`
  display: flex;
  align-items: center;
  flex: 1;
  height: 27px;
  margin-left: -4px;
  padding-left: 8px;
  border: 1px solid #aaaaaa;
  border-right: 0;
  border-radius: 3px 0 0 3px;
  background: #ffffff;
  font-family: "Noto Sans CJK JP", sans-serif;
  font-size: 12px;
  font-weight: 400;
  color: #0b8043;
`

const Secure = styled.span`
  margin: 0 8px;
  padding-right: 11px;
  border-right: 1px solid #999999;
  line-height: 16px;
`

const Scheme = styled.span`
  font-family: "Noto Sans", sans-serif;
  font-size: 13px;
`

const SiteName = styled.a`
  display: block;
  padding: 15px 14px;
  background: #f8f8f8;
  font-size: 18px;
  font-weight: 400;
  color: #777777;
`

const SiteMenu = styled.nav`
  padding-left: 29px;
  border: solid #e7e7e7;
  border-width: 1px 0;
  background: #f8f8f8;
  line-height: 20px;
  font-weight: 400;
  color: #666666;
`

const SitePath = styled.nav`
  margin-top: 20px;
  padding: 8px 14px;
  border-radius: 4px;
  background: #f5f5f5;
  color: #777777;

  a { color: #337ab7; }
  i {
    padding: 0 7px;
    font-style: normal;
    font-weight: 400;
    color: #cccccc;
  }
`

const CompareTitle = styled.h2`
  display: flex;
  align-items: center;
  height: 20px;
  margin: 20px 0 11px 13px;
  font-size: 14px;
  font-weight: 500;

  svg { margin-left: 14px; }
`

const CompareGrid = styled.div`
  display: grid;
  grid-template-columns: 1fr 1fr;
  gap: 4px;
  padding: 0 62px 0 2px;
`

const CompareCard = styled.section`
  padding: 0 11px 2px 13px;
  border-bottom: 1px solid #eeeeee;
  border-radius: 4px;
`

const PlanFrame = styled.div`
  position: relative;
  aspect-ratio: 642 / 481;
  border: 2px solid #000000;
`

const PlanDrawing = styled.svg`
  display: block;
  width: 100%;
  height: 100%;
  fill: none;

  > path {
    stroke: #222222;
    vector-effect: non-scaling-stroke;
    shape-rendering: crispEdges;
  }
`

const Pin = styled.span`
  position: absolute;
  display: grid;
  place-items: center;
  width: 25px;
  height: 25px;
  margin: -12px 0 0 -12px;
  border-radius: 50%;
  background: ${(props) => props.$color};
  font-family: "Noto Sans", "Noto Sans CJK JP", sans-serif;
  font-size: 12px;
  font-weight: 700;
  line-height: 12px;
  white-space: nowrap;
  color: #ffffff;
  text-shadow: 1px 0 #000000, -1px 0 #000000, 0 1px #000000, 0 -1px #000000;
`

const PlanMenu = styled.button`
  position: absolute;
  top: 11px;
  right: 9px;
  display: grid;
  padding: 2px 3px;
  border: 0;
  background: #ffffff;
`

const Fields = styled.div`
  display: flex;
  justify-content: space-between;
  margin-top: 5px;
  padding-right: 5px;
`

const Field = styled.div`
  display: flex;
  align-items: center;
  height: 26px;

  label {
    flex: none;
    margin-right: 4px;
  }
  input {
    width: 100%;
    min-width: 0;
    height: 26px;
    padding: 0 2px;
    border: 1px solid #aaaaaa;
    outline: 0;
    background: #ffffff;
  }
`

const StoreField = styled(Field)`
  width: 45%;
  input {
    padding-left: 29px;
    border-radius: 3px 0 0 3px;
    font-weight: 400;
  }
`

const DateField = styled(Field)`
  width: 48%;
  input { font-weight: 700; }
`

const MaskedInput = styled.span`
  position: relative;
  flex: 1;
  display: flex;

  svg {
    position: absolute;
    left: 1px;
    top: 5px;
  }
`

const IconButton = styled.button`
  display: grid;
  place-items: center;
  flex: none;
  width: 29px;
  height: 26px;
  padding: 0;
  margin-left: -1px;
  border: 1px solid #999999;
  border-radius: 0 2px 2px 0;
  background: linear-gradient(#f6f6f6, #dddddd);
`

const LevelRow = styled.div`
  display: flex;
  justify-content: space-between;
  align-items: center;
  margin-top: 15px;
  padding-right: 10px;
`

const Levels = styled.div`
  display: flex;
`

const Level = styled.span`
  width: 85px;
  height: 25px;
  border: 1px solid #666666;
  border-right: 0;
  background: ${(props) => props.$bg};
  color: ${(props) => props.$fg};
  font-weight: 700;
  line-height: 24px;
  text-align: center;
`

const ClearButton = styled.button`
  height: 26px;
  padding: 0 7px;
  border: 1px solid #999999;
  border-radius: 2px;
  background: linear-gradient(#f6f6f6, #dddddd);
`

const Totals = styled.div`
  margin: 18px 13px;
`
